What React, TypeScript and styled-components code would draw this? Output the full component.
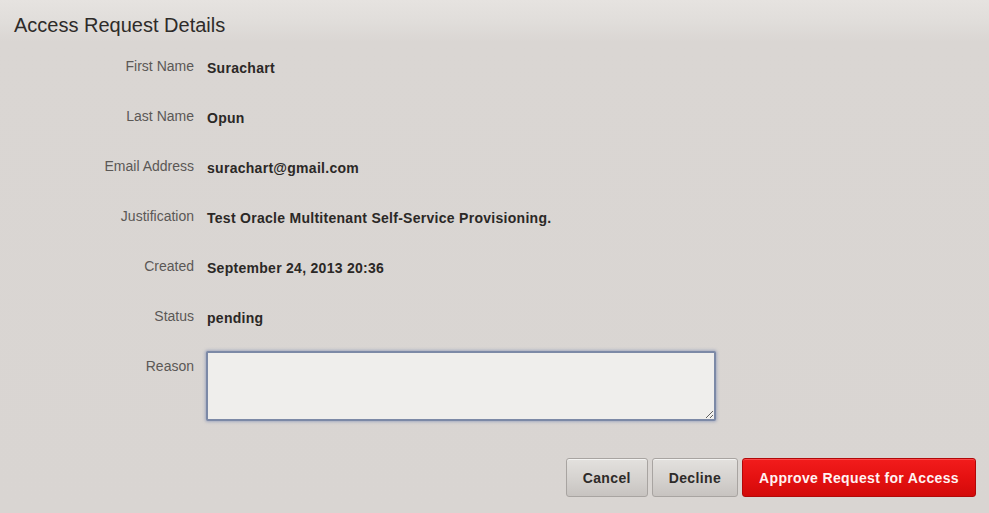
import React from "react";
import styled, { createGlobalStyle } from "styled-components";

const Global = createGlobalStyle`
  html, body { margin: 0; padding: 0; }
  body {
    width: 989px;
    height: 513px;
    overflow: hidden;
    font-family: "Liberation Sans", Arial, sans-serif;
    background: linear-gradient(to bottom, #e6e3e0 0px, #e1dedb 20px, #dad6d3 42px, #d9d5d2 100%);
  }
`;

const Page = styled.div`
  width: 989px;
  height: 513px;
  box-sizing: border-box;
  display: flex;
  flex-direction: column;
`;

const Title = styled.h1`
  margin: 0;
  padding: 13px 0 0 14px;
  font-size: 20px;
  line-height: 24px;
  font-weight: normal;
  color: #2e2b29;
`;

const Form = styled.div`
  margin-top: 14px;
  display: grid;
  grid-template-columns: 194px 1fr;
  grid-template-rows: repeat(6, 50px) 70px;
  column-gap: 12px;
`;

const Label = styled.div`
  text-align: right;
  padding-top: 7px;
  font-size: 14px;
  line-height: 16px;
  color: #5b5856;
`;

const Value = styled.div`
  padding-top: 9px;
  padding-left: 1px;
  font-size: 14px;
  line-height: 16px;
  font-weight: bold;
  letter-spacing: 0.28px;
  color: #2b2826;
`;

const ReasonCell = styled.div`
  height: 70px;
`;

const ReasonInput = styled.textarea`
  box-sizing: border-box;
  width: 510px;
  height: 70px;
  margin: 0;
  border: 2px solid #7c89a6;
  border-radius: 2px;
  background: #efeeec;
  box-shadow: 0 0 3px 1px rgba(120, 135, 175, 0.55);
  outline: none;
  font-family: "Liberation Sans", Arial, sans-serif;
  font-size: 14px;
`;

const Actions = styled.div`
  margin-top: 37px;
  padding-right: 13px;
  display: flex;
  justify-content: flex-end;
  gap: 4px;
`;

const Button = styled.button<{ $primary?: boolean }>`
  height: 39px;
  padding: 0 16px;
  border-radius: 3px;
  font-family: "Liberation Sans", Arial, sans-serif;
  font-size: 14px;
  font-weight: bold;
  letter-spacing: 0.35px;
  cursor: pointer;
  border: 1px solid ${(p) => (p.$primary ? "#b20808" : "#a8a4a1")};
  color: ${(p) => (p.$primary ? "#fff2f2" : "#2e2b29")};
  background: ${(p) =>
    p.$primary
      ? "linear-gradient(to bottom, #f21c1c 0%, #e51111 50%, #d30a0a 100%)"
      : "linear-gradient(to bottom, #e3e1de 0%, #d6d3d0 50%, #c7c3c0 100%)"};
  box-shadow: inset 0 1px 0 ${(p) => (p.$primary ? "rgba(255,120,120,0.5)" : "rgba(255,255,255,0.6)")};
`;

const rows: [string, string][] = [
  ["First Name", "Surachart"],
  ["Last Name", "Opun"],
  ["Email Address", "surachart@gmail.com"],
  ["Justification", "Test Oracle Multitenant Self-Service Provisioning."],
  ["Created", "September 24, 2013 20:36"],
  ["Status", "pending"],
];

export default function App() {
  return (
    <Page>
      <Global />
      <Title>Access Request Details</Title>
      <Form>
        {rows.map(([l, v]) => (
          <React.Fragment key={l}>
            <Label>{l}</Label>
            <Value>{v}</Value>
          </React.Fragment>
        ))}
        <Label>Reason</Label>
        <ReasonCell>
          <ReasonInput />
        </ReasonCell>
      </Form>
      <Actions>
        <Button>Cancel</Button>
        <Button>Decline</Button>
        <Button $primary>Approve Request for Access</Button>
      </Actions>
    </Page>
  );
}
